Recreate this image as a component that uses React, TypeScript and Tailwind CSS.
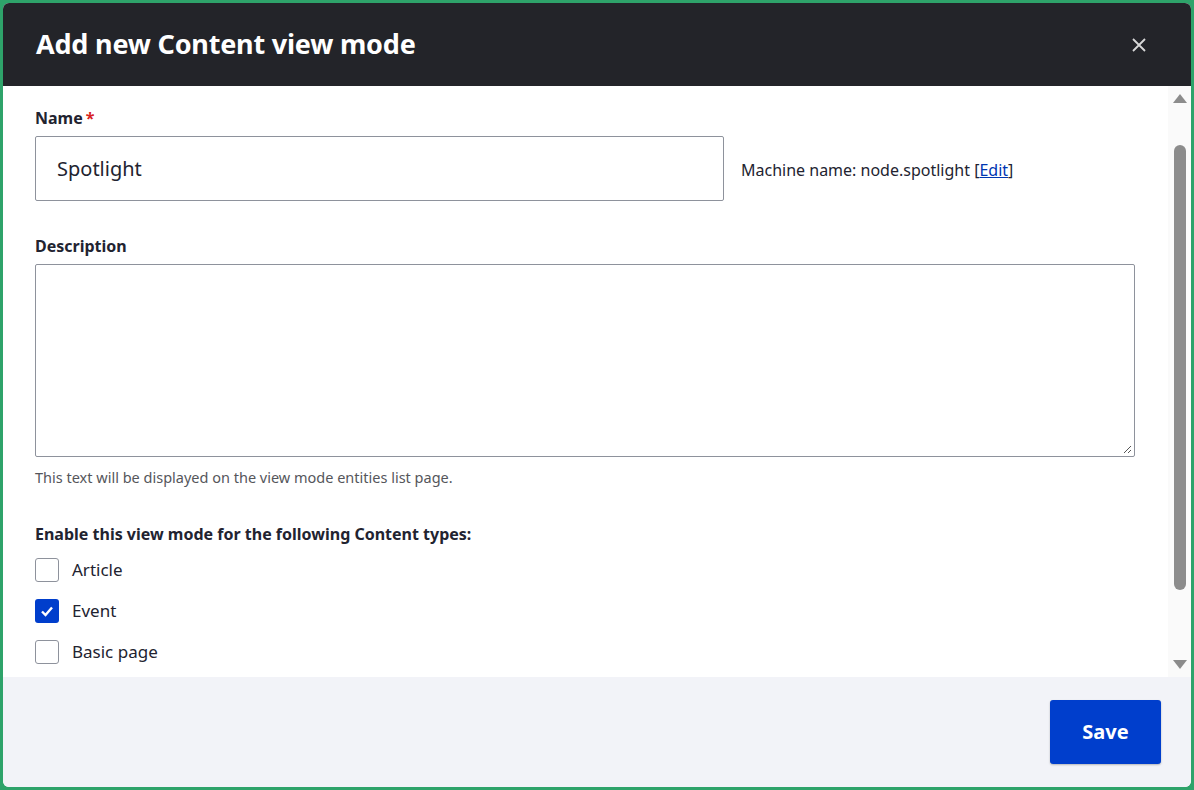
import React from "react";

export default function App() {
  const font = { fontFamily: '"Noto Sans","Open Sans",sans-serif' };
  const items = [
    { label: "Article", checked: false },
    { label: "Event", checked: true },
    { label: "Basic page", checked: false },
  ];
  return (
    <div style={font} className="w-[1194px] h-[790px] bg-[#2ea36a] p-[3px] overflow-hidden">
      <div className="w-full h-full rounded-[6px] overflow-hidden flex flex-col bg-white">
        <div className="h-[83px] bg-[#232429] flex items-center justify-between pl-[33px] pr-[44px] shrink-0">
          <h1 className="text-white text-[27px] font-bold tracking-[-0.2px]">Add new Content view mode</h1>
          <svg width="16" height="16" viewBox="0 0 16 16"><path d="M2 2L14 14M14 2L2 14" stroke="#d8d8d8" strokeWidth="1.8" /></svg>
        </div>
        <div className="flex h-[591px] shrink-0">
          <div className="flex-1 pl-[32px] pr-[32px] pt-[20px] text-[#222330]">
            <div className="text-[16px] font-bold leading-[24px]">Name<span className="text-[#d72222] ml-[3px]">*</span></div>
            <div className="flex items-center mt-[6px]">
              <div className="w-[689px] h-[65px] border border-[#8e929c] rounded-[2px] flex items-center px-[21px] text-[20px]">Spotlight</div>
              <div className="ml-[17px] text-[16px] mt-[2px]">Machine name: node.spotlight [<span className="text-[#0036b1] underline">Edit</span>]</div>
            </div>
            <div className="text-[16px] font-bold leading-[24px] mt-[33px]">Description</div>
            <div className="relative w-[1100px] h-[193px] border border-[#8e929c] rounded-[2px] mt-[6px]">
              <svg className="absolute right-[2px] bottom-[2px]" width="10" height="10" viewBox="0 0 10 10"><path d="M9 2L2 9M9 6L6 9" stroke="#555" strokeWidth="1" /></svg>
            </div>
            <div className="text-[14.5px] text-[#55565b] mt-[10px]">This text will be displayed on the view mode entities list page.</div>
            <div className="text-[16px] font-bold mt-[33px] leading-[24px]">Enable this view mode for the following Content types:</div>
            <div className="flex flex-col gap-[17px] mt-[12px]">
              {items.map((it) => (
                <div key={it.label} className="flex items-center h-[24px]">
                  {it.checked ? (
                    <div className="w-[24px] h-[24px] rounded-[3px] bg-[#003ecc] flex items-center justify-center">
                      <svg width="16" height="16" viewBox="0 0 16 16"><path d="M3 8.5L6.5 12L13 4.5" stroke="white" strokeWidth="2.4" fill="none" /></svg>
                    </div>
                  ) : (
                    <div className="w-[24px] h-[24px] rounded-[3px] border border-[#8e929c] bg-white" />
                  )}
                  <span className="ml-[13px] text-[17px]">{it.label}</span>
                </div>
              ))}
            </div>
          </div>
          <div className="w-[23px] bg-[#fafafa] flex flex-col items-center py-[8px] relative">
            <svg width="14" height="9" viewBox="0 0 14 9"><path d="M7 0L14 9H0Z" fill="#8c8c8c" /></svg>
            <div className="w-[12px] h-[445px] rounded-full bg-[#8c8c8c] mt-[42px]" />
            <div className="flex-1" />
            <svg width="14" height="9" viewBox="0 0 14 9"><path d="M0 0H14L7 9Z" fill="#8c8c8c" /></svg>
          </div>
        </div>
        <div className="flex-1 bg-[#f2f3f8] flex justify-end items-start pt-[23px] pr-[30px]">
          <button className="w-[111px] h-[64px] bg-[#003ecc] rounded-[3px] text-white text-[20px] font-bold shadow-[0_1px_2px_rgba(0,0,0,0.25)]">Save</button>
        </div>
      </div>
    </div>
  );
}
